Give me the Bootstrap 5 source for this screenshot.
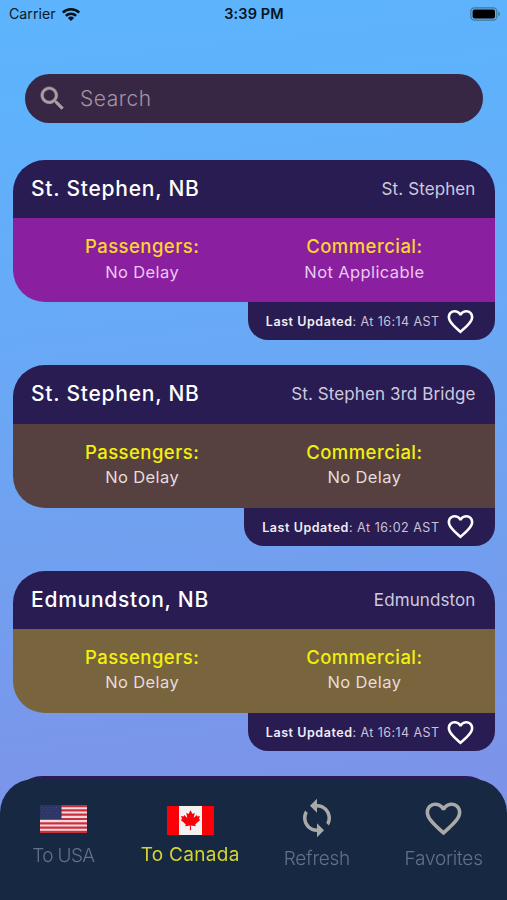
<!DOCTYPE html>
<html lang="en">
<head>
<meta charset="utf-8">
<meta name="viewport" content="width=device-width, initial-scale=1">
<title>Border Wait Times</title>
<link href="https://cdn.jsdelivr.net/npm/bootstrap@5.3.0/dist/css/bootstrap.min.css" rel="stylesheet">
<style>
body{font-family:Inter,"Liberation Sans",sans-serif;line-height:1}
.screen{background:linear-gradient(174deg,#5db4fd 0%,#5fb1fb 14%,#6ca6f3 45%,#7b94e9 85%,#7f90e6 100%)}
svg{display:block;flex:none}
.status-bar{height:28px;flex:none;padding:0 6px 0 9px;font-size:14.2px;color:#0c1a26}
.status-bar .side{flex:1 1 0}
.wifi{margin-left:5px}
.clock{font-weight:600;font-size:14.5px;color:#07131d;letter-spacing:.1px;margin-right:2px}
.search-box{flex:none;margin:46px 24.5px 37px 25px;height:49px;border-radius:25px;background:#382744;color:#aa9fa5;padding-left:12px}
.search-box input{background:none;border:0;outline:0;padding:0;margin-left:12px;font-size:21px;font-weight:300;color:inherit;letter-spacing:.55px}
.search-box input::placeholder{color:#a294a2;opacity:1}
.crossings{min-height:0;overflow:hidden}
.crossing{margin:0 12.5px 0 13px;height:205.3px}
.panel{border-radius:32px 32px 0 32px;overflow:hidden}
.panel-head{height:58.3px;background:#281c52;padding:0 19px 1px 18px}
.town{font-size:21px;font-weight:500;color:#fff;letter-spacing:.75px}
.bridge{font-size:17px;color:#cfc9de;letter-spacing:.1px;padding-top:2px}
.panel-body{height:84.2px;padding:18px 19px 0 18px}
.tone-purple{background:#8a209f}
.tone-brown{background:#574140}
.tone-olive{background:#78643d}
.kind{font-size:18.5px;line-height:20px;font-weight:500;color:#f2f00c;letter-spacing:.45px}
.tone-purple .kind{color:#fbd52c}
.wait{font-size:16.5px;line-height:20px;margin-top:5.5px;color:#e6dcdc;letter-spacing:.4px}
.tone-purple .wait{color:#ecc9f2}
.updated{height:38px;background:#281c52;border-radius:0 0 20px 20px;padding:0 18.5px 0 18px;font-size:12.5px;color:#c9c2da;letter-spacing:.43px}
.updated.roomy{letter-spacing:.52px}
.updated span{padding-top:2px}
.updated b{font-weight:600;color:#f0edf6;letter-spacing:.55px}
.updated svg{margin-left:5.5px}
.tabs{height:121.5px;background:#172942;border-radius:34px 34px 0 0;padding:0;align-items:stretch}
.tab{font-size:19px;font-weight:300;color:#637086;text-decoration:none;letter-spacing:-.2px}
.tab .glyph{height:42px;margin-top:18.5px}
.tab .caption{line-height:22px;margin-top:9px}
.tab.flagged .caption{margin-top:5.5px;letter-spacing:-.6px}
.tab.flagged .glyph{padding:1px 0 0 1px}
.tab.on{color:#d6d52b;font-weight:400}
.tab.on .glyph{padding-top:4px}
.tab.on .caption{margin-top:5px;letter-spacing:.3px}
</style>
<script src="https://cdn.jsdelivr.net/npm/bootstrap@5.3.0/dist/js/bootstrap.bundle.min.js"></script>
</head>
<body>
<div class="screen vh-100 d-flex flex-column overflow-hidden">
<svg width="0" height="0" class="position-absolute" aria-hidden="true">
  <symbol id="heart" viewBox="0 0 24 24"><path fill="currentColor" d="M16.5 3c-1.74 0-3.41.81-4.5 2.09C10.91 3.81 9.24 3 7.5 3 4.42 3 2 5.42 2 8.5c0 3.78 3.4 6.86 8.55 11.54L12 21.35l1.45-1.32C18.6 15.36 22 12.28 22 8.5 22 5.42 19.58 3 16.5 3zm-4.4 15.55l-.1.1-.1-.1C7.14 14.24 4 11.39 4 8.5 4 6.5 5.5 5 7.5 5c1.54 0 3.04.99 3.57 2.36h1.87C13.46 5.99 14.96 5 16.5 5c2 0 3.5 1.5 3.5 3.5 0 2.89-3.14 5.74-7.9 10.05z"/></symbol>
</svg>

<header class="status-bar d-flex align-items-center">
  <div class="side d-flex align-items-center">
    <span class="carrier">Carrier</span>
    <svg class="wifi" width="20" height="15" viewBox="0 0 20 15" fill="none" stroke="#06121b" stroke-width="2.6"><path d="M1.8 5.6a11.7 11.7 0 0 1 16.4 0M4.9 8.9a7.3 7.3 0 0 1 10.2 0"/><path d="M10 14 6.9 10.9a4.4 4.4 0 0 1 6.2 0z" fill="#06121b" stroke="none"/></svg>
  </div>
  <span class="clock">3:39 PM</span>
  <div class="side d-flex justify-content-end">
    <svg width="31" height="14" viewBox="0 0 31 14"><rect x=".8" y=".8" width="26" height="12.4" rx="3.6" fill="none" stroke="#427894" stroke-width="1.2"/><rect x="2.6" y="2.6" width="22.4" height="8.8" rx="2" fill="#000"/><path d="M28.4 4.6c2 .6 2 4.2 0 4.8z" fill="#427894"/></svg>
  </div>
</header>

<div class="search-box d-flex align-items-center">
  <svg width="31" height="31" viewBox="0 0 24 24" fill="currentColor"><path d="M15.5 14h-.79l-.28-.27C15.41 12.59 16 11.11 16 9.5 16 5.91 13.09 3 9.5 3S3 5.91 3 9.5 5.91 16 9.5 16c1.61 0 3.09-.59 4.23-1.57l.27.28v.79l5 4.99L20.49 19l-4.99-5zm-6 0C7.01 14 5 11.99 5 9.5S7.01 5 9.5 5 14 7.01 14 9.5 11.99 14 9.5 14z" stroke="currentColor" stroke-width=".4"/></svg>
  <input type="text" placeholder="Search" aria-label="Search">
</div>

<main class="crossings flex-grow-1">
  <article class="crossing">
    <div class="panel">
      <div class="panel-head d-flex justify-content-between align-items-center"><span class="town">St. Stephen, NB</span><span class="bridge">St. Stephen</span></div>
      <div class="panel-body tone-purple"><div class="row g-0 text-center">
        <div class="col-6"><div class="kind">Passengers:</div><div class="wait">No Delay</div></div>
        <div class="col-6"><div class="kind">Commercial:</div><div class="wait">Not Applicable</div></div>
      </div></div>
    </div>
    <div class="d-flex justify-content-end"><div class="updated d-flex align-items-center"><span><b>Last Updated</b>: At 16:14 AST</span><svg width="31" height="31" color="#fff"><use href="#heart"/></svg></div></div>
  </article>
  <article class="crossing">
    <div class="panel">
      <div class="panel-head d-flex justify-content-between align-items-center"><span class="town">St. Stephen, NB</span><span class="bridge">St. Stephen 3rd Bridge</span></div>
      <div class="panel-body tone-brown"><div class="row g-0 text-center">
        <div class="col-6"><div class="kind">Passengers:</div><div class="wait">No Delay</div></div>
        <div class="col-6"><div class="kind">Commercial:</div><div class="wait">No Delay</div></div>
      </div></div>
    </div>
    <div class="d-flex justify-content-end"><div class="updated roomy d-flex align-items-center"><span><b>Last Updated</b>: At 16:02 AST</span><svg width="31" height="31" color="#fff"><use href="#heart"/></svg></div></div>
  </article>
  <article class="crossing">
    <div class="panel">
      <div class="panel-head d-flex justify-content-between align-items-center"><span class="town">Edmundston, NB</span><span class="bridge">Edmundston</span></div>
      <div class="panel-body tone-olive"><div class="row g-0 text-center">
        <div class="col-6"><div class="kind">Passengers:</div><div class="wait">No Delay</div></div>
        <div class="col-6"><div class="kind">Commercial:</div><div class="wait">No Delay</div></div>
      </div></div>
    </div>
    <div class="d-flex justify-content-end"><div class="updated d-flex align-items-center"><span><b>Last Updated</b>: At 16:14 AST</span><svg width="31" height="31" color="#fff"><use href="#heart"/></svg></div></div>
  </article>
  <div class="crossing h-auto"><div class="panel"><div class="panel-head"></div></div></div>
</main>

<nav class="tabs navbar fixed-bottom"><div class="row g-0 w-100 text-center">
  <a class="tab flagged col-3" href="#"><div class="glyph d-flex align-items-center justify-content-center">
    <svg width="47" height="28" viewBox="0 0 47 28"><path fill="#f6d9dc" d="M0 0h47v28H0z"/><path stroke="#c9303f" stroke-width="2.15" d="M0 1.08h47M0 5.38h47M0 9.69h47M0 14h47M0 18.3h47M0 22.6h47M0 26.9h47"/><path fill="#2c3563" d="M0 0h21.5v14H0z"/><path stroke="#414a78" stroke-width="1" stroke-dasharray="1 2.5" d="M2 2.5h18M3.7 5h15M2 7.5h18M3.7 10h15M2 12.3h18"/></svg>
  </div><div class="caption">To USA</div></a>
  <a class="tab on col-3" href="#"><div class="glyph d-flex align-items-center justify-content-center">
    <svg width="47" height="29" viewBox="0 0 47 29"><path fill="#f4f1f1" d="M0 0h47v29H0z"/><path fill="#fb0007" d="M0 0h12v29H0zM35 0h12v29H35zM23.5 4.2l2 3.7 2.2-1.2-1 5.2 3.1-3 .7 1.6 2.4-.4-.9 3 1.2.9-4.9 4.2.4 2-4.8-.7.2 4.8h-1.2l.2-4.8-4.8.7.4-2-4.9-4.2 1.2-.9-.9-3 2.4.4.7-1.6 3.1 3-1-5.2 2.2 1.2z"/></svg>
  </div><div class="caption">To Canada</div></a>
  <a class="tab col-3" href="#"><div class="glyph d-flex align-items-center justify-content-center">
    <svg width="42" height="42" viewBox="0 0 24 24" fill="#a9aaa8"><path d="M12 4V1L8 5l4 4V6c3.31 0 6 2.69 6 6 0 1.01-.25 1.97-.7 2.8l1.46 1.46C19.54 15.03 20 13.57 20 12c0-4.42-3.58-8-8-8zm0 14c-3.31 0-6-2.69-6-6 0-1.01.25-1.97.7-2.8L5.24 7.74C4.46 8.97 4 10.43 4 12c0 4.42 3.58 8 8 8v3l4-4-4-4v3z"/></svg>
  </div><div class="caption">Refresh</div></a>
  <a class="tab col-3" href="#"><div class="glyph d-flex align-items-center justify-content-center">
    <svg width="43" height="43" color="#a9aaa8"><use href="#heart"/></svg>
  </div><div class="caption">Favorites</div></a>
</div></nav>
</div>
</body>
</html>
